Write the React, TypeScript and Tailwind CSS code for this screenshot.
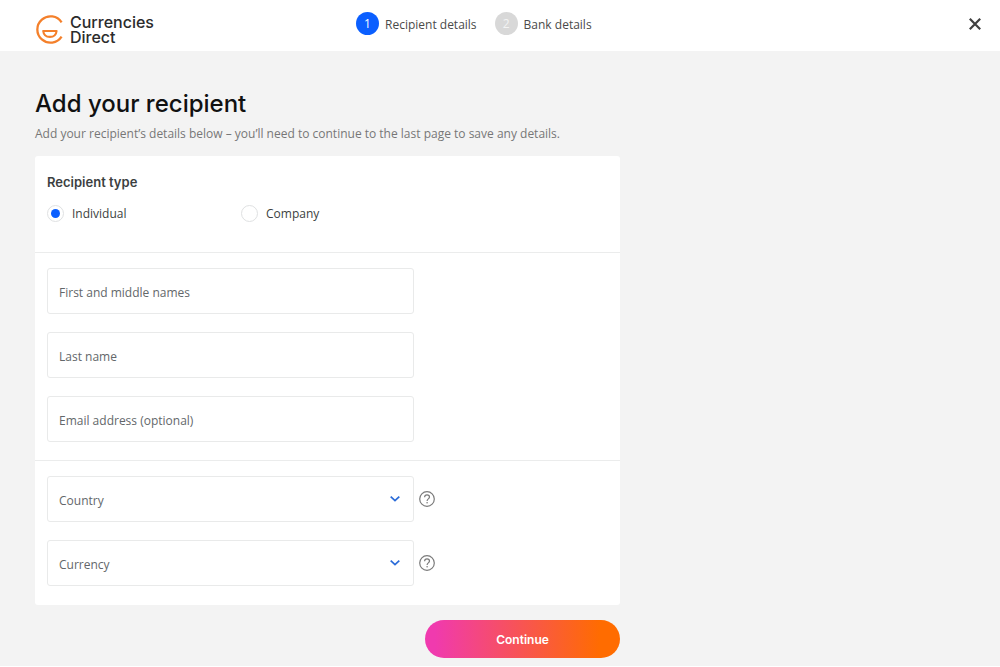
import { useState } from "react";

const fieldBox =
  "peer col-start-1 row-start-1 h-[46px] w-full rounded-[3px] border border-[#e9eaea] bg-white px-[11px] pt-1 text-xs text-[#3c3f41] outline-none focus:border-[#0b5fff]";

const floatingLabel =
  "pointer-events-none z-10 col-start-1 row-start-1 self-center justify-self-start pt-1 pl-3 text-xs leading-5 text-[#63676a]";

function Logo() {
  return (
    <a href="#home" className="flex items-center gap-[6px] text-[#2b2b2b]">
      <svg viewBox="0 0 28 30" className="h-[30px] w-[28px]" fill="none" stroke="#f4802b" aria-hidden="true">
        <path d="M25.600 7.300A13.200 13.200 0 1 0 25.600 21.700" strokeWidth="2.300" />
        <path d="M7.200 16h13.400c-.4 3.700-3.200 5.900-6.700 5.900S7.600 19.700 7.200 16Z" strokeWidth="2.100" strokeLinejoin="round" />
      </svg>
      <span className="flex flex-col font-['Inter',sans-serif] text-base leading-[15px] font-medium">
        <span>Currencies</span>
        <span>Direct</span>
      </span>
    </a>
  );
}

function Step({ number, label, active }: { number: number; label: string; active?: boolean }) {
  return (
    <li className="flex items-center gap-[6px]" aria-current={active ? "step" : undefined}>
      <span
        className={
          active
            ? "flex size-[23px] items-center justify-center rounded-full bg-[#0b5fff] text-xs font-medium text-white"
            : "flex size-[23px] items-center justify-center rounded-full bg-[#d8d8d8] text-xs font-medium text-[#f3f3f3]"
        }
      >
        {number}
      </span>
      <span className="pt-[2px] text-xs text-[#4a4a4a]">{label}</span>
    </li>
  );
}

function RadioOption({ label, checked, onChange }: { label: string; checked: boolean; onChange: () => void }) {
  return (
    <label className="flex items-center gap-2 text-xs leading-5 text-[#3c3f41]">
      <input
        type="radio"
        name="recipient-type"
        checked={checked}
        onChange={onChange}
        className="grid size-[17px] appearance-none place-content-center rounded-full border border-[#dfe1e2] bg-white before:size-[9px] before:rounded-full checked:before:bg-[#0b5fff]"
      />
      <span className="pt-[2px] leading-[18px]">{label}</span>
    </label>
  );
}

function TextField({ id, label, type = "text" }: { id: string; label: string; type?: string }) {
  return (
    <div className="grid max-w-[367px]">
      <input id={id} type={type} placeholder=" " className={fieldBox} />
      <label htmlFor={id} className={`${floatingLabel} peer-[:not(:placeholder-shown)]:self-start peer-[:not(:placeholder-shown)]:pt-0 peer-[:not(:placeholder-shown)]:text-[10px]`}>
        {label}
      </label>
    </div>
  );
}

function SelectField({ id, label, options }: { id: string; label: string; options: string[] }) {
  return (
    <div className="flex items-center gap-[5px]">
      <div className="grid w-full max-w-[367px]">
        <select id={id} defaultValue="" required className={`${fieldBox} appearance-none`}>
          <option value="" disabled />
          {options.map((option) => (
            <option key={option}>{option}</option>
          ))}
        </select>
        <label htmlFor={id} className={`${floatingLabel} peer-valid:self-start peer-valid:pt-0 peer-valid:text-[10px]`}>
          {label}
        </label>
        <svg
          viewBox="0 0 10 6"
          className="pointer-events-none z-10 col-start-1 row-start-1 mr-[14px] h-[6px] w-[10px] self-center justify-self-end"
          fill="none"
          stroke="#2a6bd8"
          strokeWidth="1.700"
          aria-hidden="true"
        >
          <path d="M.7.700 5 4.700 9.300.700" />
        </svg>
      </div>
      <button type="button" aria-label={`Help with ${label.toLowerCase()}`} className="shrink-0">
        <svg viewBox="0 0 16 16" className="size-4" fill="none" stroke="#7b7b7b" aria-hidden="true">
          <circle cx="8" cy="8" r="7.300" strokeWidth="1.200" />
          <path d="M5.600 6.300C5.600 4.800 6.600 3.900 8 3.900s2.500.9 2.500 2.200c0 1.800-2.400 1.800-2.400 3.800" strokeWidth="1.200" />
          <circle cx="8.100" cy="11.800" r=".8" fill="#7b7b7b" stroke="none" />
        </svg>
      </button>
    </div>
  );
}

export default function App() {
  const [type, setType] = useState("individual");

  return (
    <div className="bg-white font-['Open_Sans',sans-serif]">
      <header className="grid grid-cols-[320px_1fr_auto] items-start pr-[19px] pb-[6px] pl-9">
        <div className="pt-[15px]">
          <Logo />
        </div>
        <ol className="flex gap-[18px] pt-3">
          <Step number={1} label="Recipient details" active />
          <Step number={2} label="Bank details" />
        </ol>
        <button type="button" aria-label="Close" className="mt-[18px]">
          <svg viewBox="0 0 12 12" className="size-3" stroke="#404040" strokeWidth="2.200" aria-hidden="true">
            <path d="M.8.800 11.200 11.200M11.200.800.8 11.200" />
          </svg>
        </button>
      </header>

      <main className="bg-[#f3f3f3] px-[35px] pt-[37px] pb-2">
        <form className="max-w-[585px]" onSubmit={(event) => event.preventDefault()}>
          <h1 className="font-['Inter',sans-serif] text-2xl leading-8 font-medium text-[#111]">Add your recipient</h1>
          <p className="mt-[6px] text-xs leading-4 text-[#777]">
            Add your recipient’s details below – you’ll need to continue to the last page to save any details.
          </p>

          <div className="mt-[14px] divide-y divide-[#ebecec] rounded-[3px] bg-white">
            <fieldset className="px-3 pt-4 pb-[29px]">
              <legend className="float-left w-full font-['Inter',sans-serif] text-[13px] leading-5 font-semibold text-[#3c3f41]">Recipient type</legend>
              <div className="clear-both grid max-w-[388px] grid-cols-2 pt-[11px]">
                <RadioOption label="Individual" checked={type === "individual"} onChange={() => setType("individual")} />
                <RadioOption label="Company" checked={type === "company"} onChange={() => setType("company")} />
              </div>
            </fieldset>
            <div className="flex flex-col gap-[18px] px-3 pt-[15px] pb-[18px]">
              <TextField id="first-names" label="First and middle names" />
              <TextField id="last-name" label="Last name" />
              <TextField id="email" label="Email address (optional)" type="email" />
            </div>
            <div className="flex flex-col gap-[18px] px-3 pt-[15px] pb-[19px]">
              <SelectField id="country" label="Country" options={["France", "Spain", "United Kingdom"]} />
              <SelectField id="currency" label="Currency" options={["EUR", "GBP", "USD"]} />
            </div>
          </div>

          <div className="mt-[15px] flex justify-end">
            <button
              type="submit"
              className="h-[38px] w-[195px] rounded-full bg-linear-to-r/srgb from-[#f03aae] from-5% to-[#ff6c00] to-90% pt-[2px] font-['Inter',sans-serif] text-xs font-semibold text-white"
            >
              Continue
            </button>
          </div>
        </form>
      </main>
    </div>
  );
}
